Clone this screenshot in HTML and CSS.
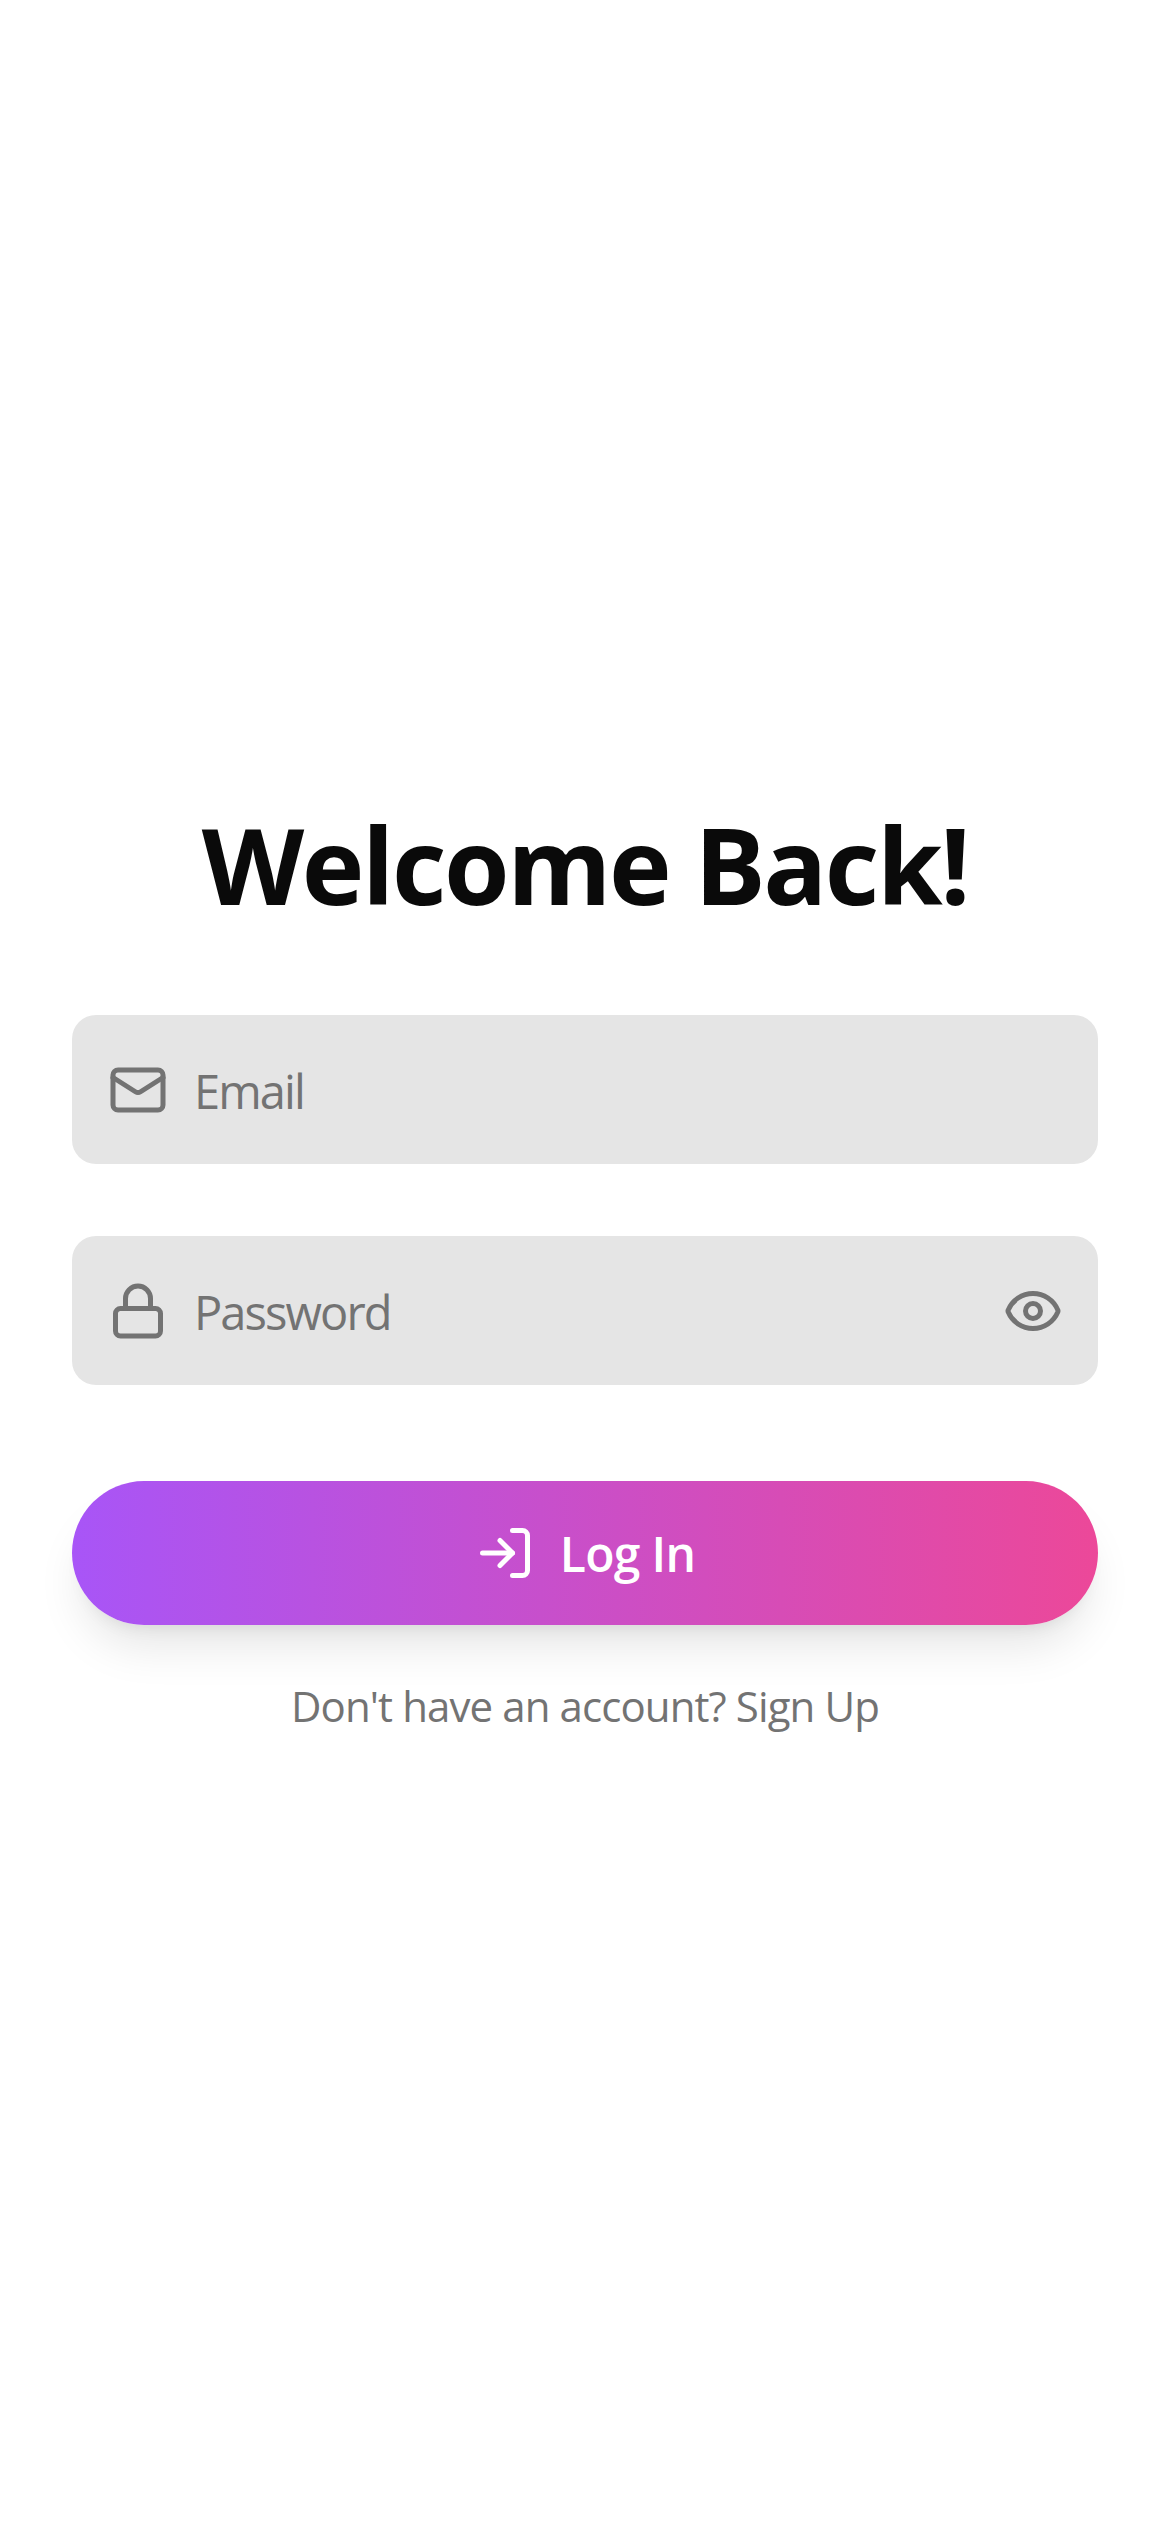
FILE: index.html
```html
<!DOCTYPE html>
<html lang="en">
<head>
  <meta charset="UTF-8">
  <title>Log In</title>
  <link rel="stylesheet" href="styles.css">
</head>
<body>
  <main class="login-container">
    <h1 class="login-title">Welcome Back!</h1>

    <form class="login-form">
      <label class="field">
        <svg class="icon" viewBox="0 0 24 24">
          <rect x="2" y="4" width="20" height="16" rx="2"/>
          <path d="m22 7-8.97 5.7a1.94 1.94 0 0 1-2.06 0L2 7"/>
        </svg>
        <input class="field-input" type="email" placeholder="Email">
      </label>

      <label class="field">
        <svg class="icon" viewBox="0 0 24 24">
          <rect x="3" y="11" width="18" height="11" rx="2"/>
          <path d="M7 11V7a5 5 0 0 1 10 0v4"/>
        </svg>
        <input class="field-input" type="password" placeholder="Password">
        <svg class="icon" viewBox="0 0 24 24">
          <path d="M2.062 12.348a1 1 0 0 1 0-.696 10.75 10.75 0 0 1 19.876 0 1 1 0 0 1 0 .696 10.75 10.75 0 0 1-19.876 0"/>
          <circle cx="12" cy="12" r="3"/>
        </svg>
      </label>

      <button class="login-button" type="button">
        <svg class="icon" viewBox="0 0 24 24">
          <path d="m10 17 5-5-5-5"/>
          <path d="M15 12H3"/>
          <path d="M15 3h4a2 2 0 0 1 2 2v14a2 2 0 0 1-2 2h-4"/>
        </svg>
        <span class="button-label">Log In</span>
      </button>
    </form>

    <a class="signup-link">Don't have an account? Sign Up</a>
  </main>
</body>
</html>
```
FILE: styles.css
```css
* {
  box-sizing: border-box;
}
body {
  margin: 0;
  background-color: #fff;
  font-family: "Segoe UI", "Open Sans", "Noto Sans", sans-serif;
}
.login-container {
  display: flex;
  flex-direction: column;
  align-items: center;
  min-height: 100vh;
  padding: 804px 72px 0;
}
.login-title {
  margin: 0 0 91px;
  font-size: 106px;
  line-height: 120px;
  font-weight: 700;
  letter-spacing: -2.4px;
  white-space: nowrap;
  color: #0a0a0a;
}
.login-form {
  display: flex;
  flex-direction: column;
  width: 100%;
}
.field {
  display: flex;
  align-items: center;
  gap: 26px;
  height: 149px;
  margin-bottom: 72px;
  padding: 0 35px 0 36px;
  border-radius: 24px;
  background-color: #e5e5e5;
}
.icon {
  flex-shrink: 0;
  width: 60px;
  height: 60px;
  fill: none;
  stroke: currentColor;
  stroke-width: 2;
  stroke-linecap: round;
  stroke-linejoin: round;
  color: #737373;
}
.field-input {
  flex: 1;
  min-width: 0;
  height: 72px;
  padding: 3px 0 0;
  border: none;
  outline: none;
  background: none;
  font-family: inherit;
  font-size: 47px;
  letter-spacing: -1.9px;
}
.field-input::placeholder {
  color: #737373;
}
.login-button {
  display: flex;
  align-items: center;
  justify-content: center;
  gap: 25px;
  height: 144px;
  margin-top: 24px;
  padding: 0;
  border: none;
  border-radius: 72px;
  background: linear-gradient(to right, #a855f7, #ec4899);
  box-shadow: 0 30px 45px -9px rgba(0, 0, 0, 0.1), 0 12px 18px -12px rgba(0, 0, 0, 0.1);
  font-family: inherit;
  font-size: 48px;
  font-weight: 600;
  letter-spacing: -0.7px;
  color: #fff;
  cursor: pointer;
}
.login-button .icon {
  color: #fff;
}
.signup-link {
  margin-top: 51px;
  font-size: 42px;
  line-height: 60px;
  letter-spacing: -0.9px;
  white-space: nowrap;
  color: #737373;
}
```
